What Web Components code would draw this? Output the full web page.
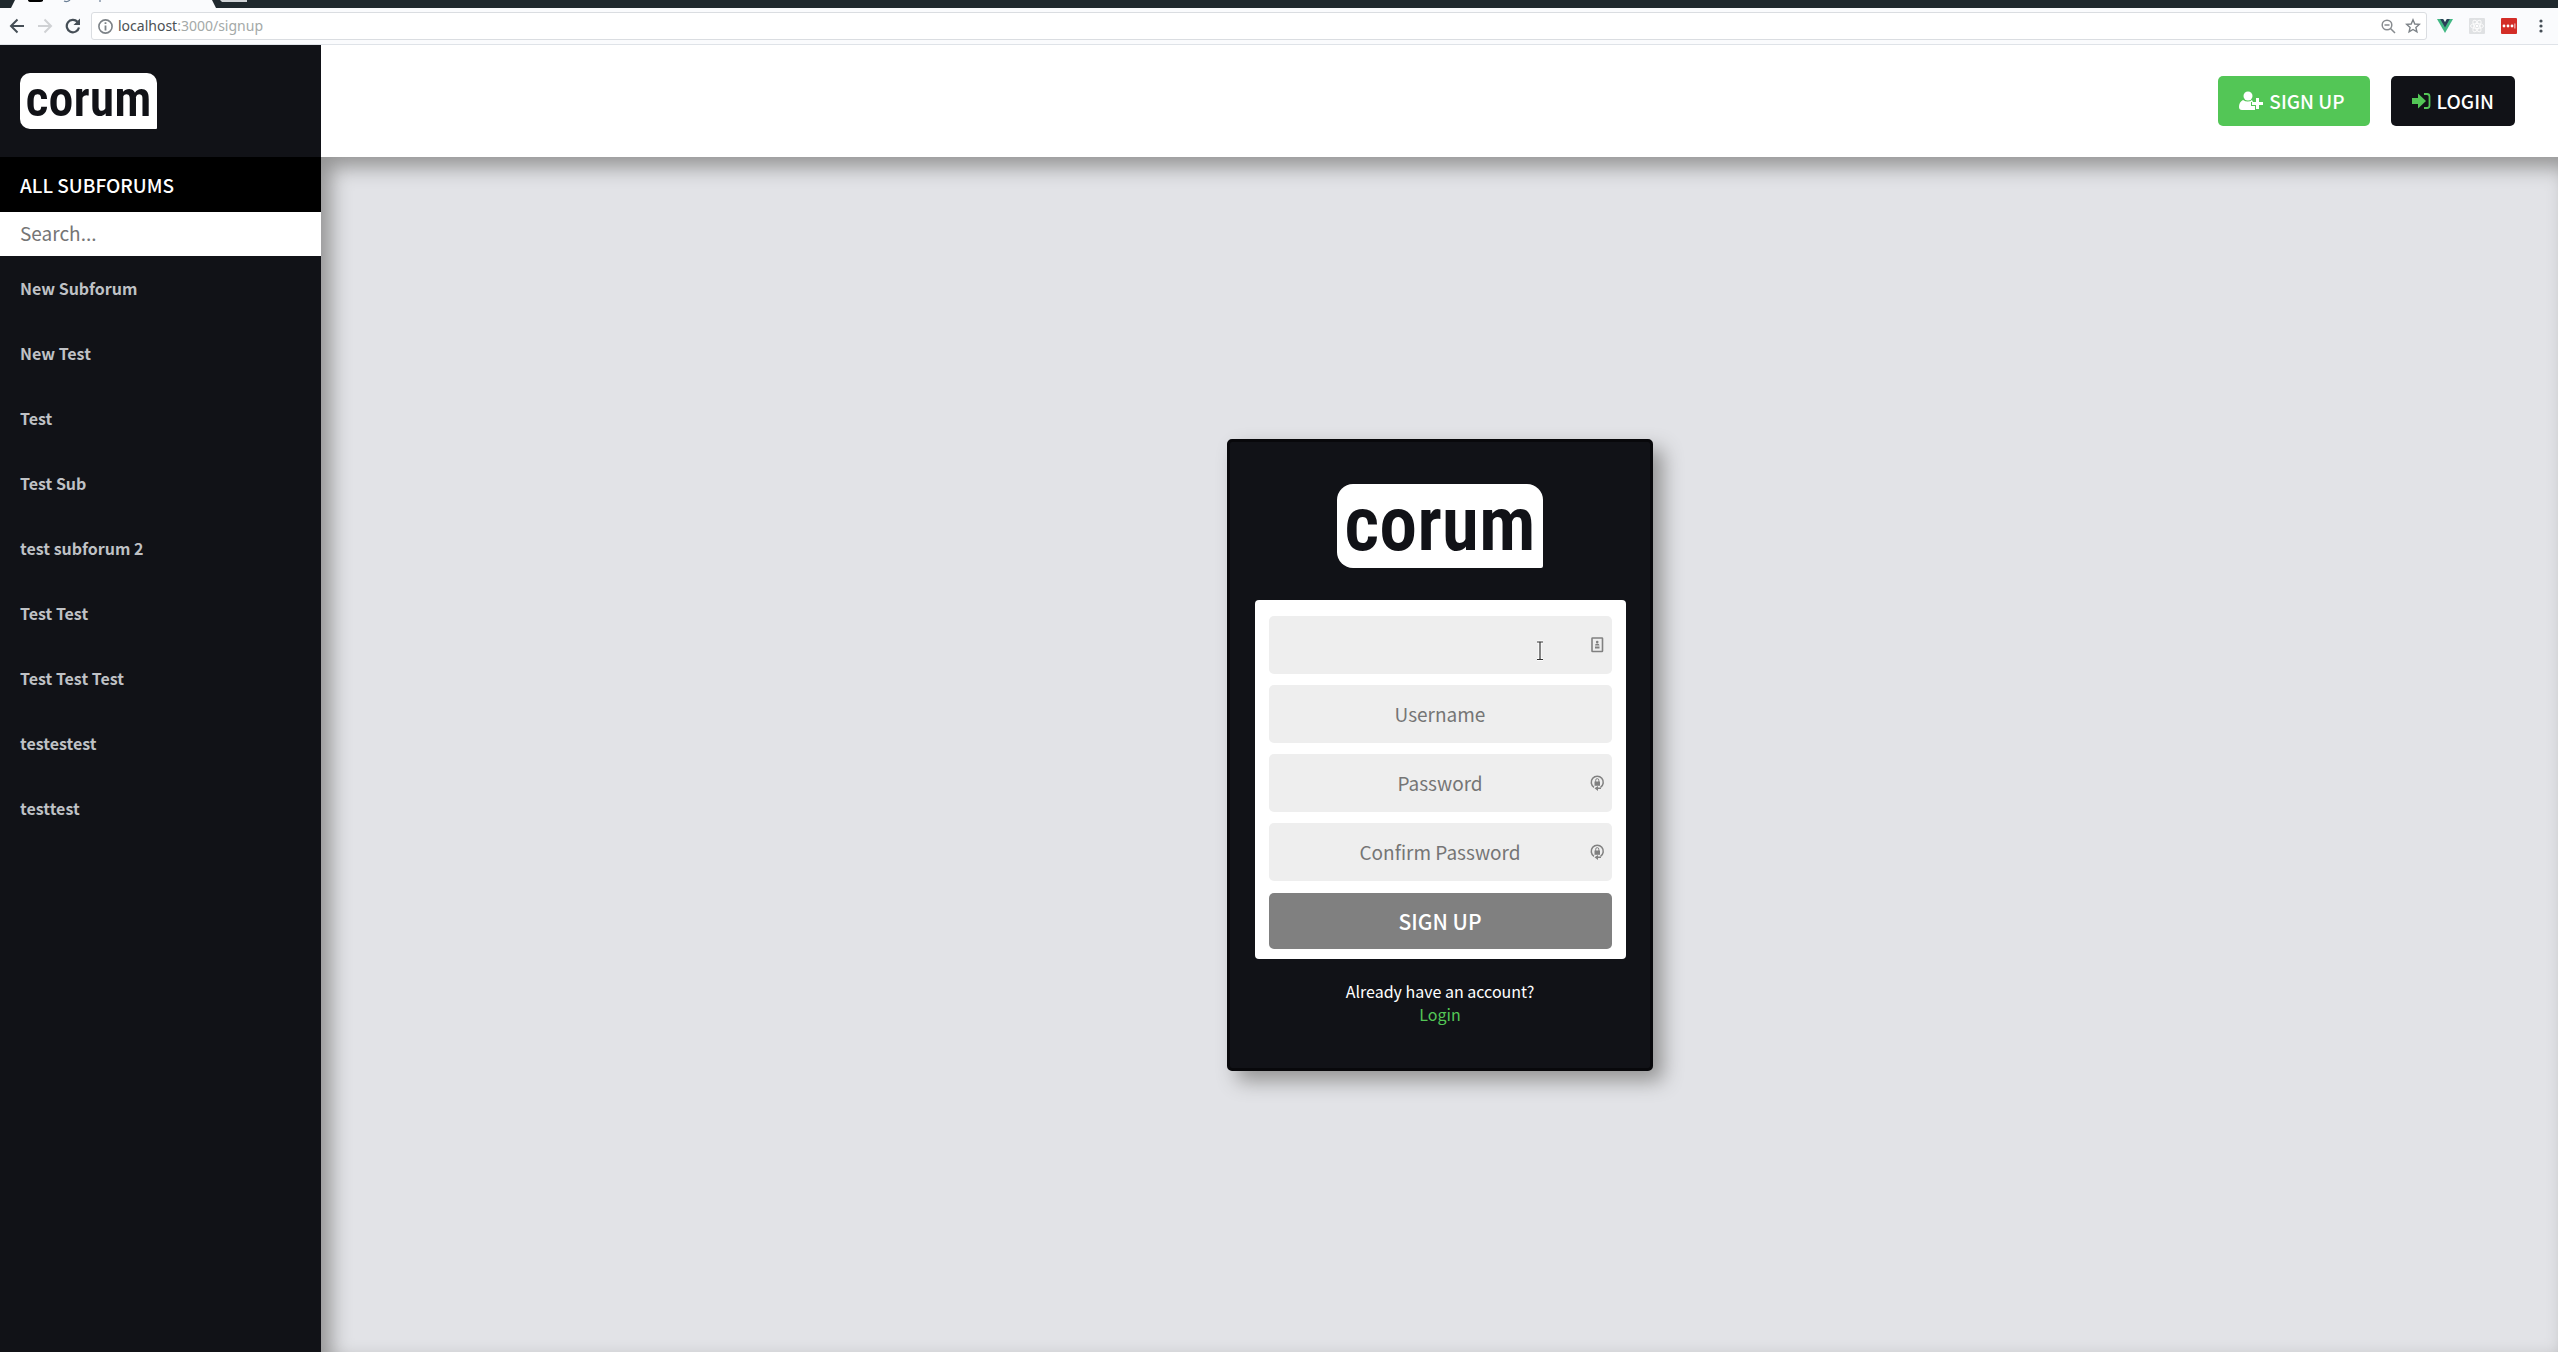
<!DOCTYPE html>
<html lang="en">
<head>
<meta charset="utf-8">
<title>Corum</title>
<style>
html, body { height: 100%; }
body { margin: 0; font-family: "Noto Sans CJK JP", "Noto Sans", sans-serif; background: #e2e3e7; }
</style>
</head>
<body>
<corum-app></corum-app>
<script>
const define = (name, html) => customElements.define(name, class extends HTMLElement {
  constructor() {
    super();
    const t = document.createElement('template');
    t.innerHTML = html;
    this.attachShadow({ mode: 'open' }).append(t.content.cloneNode(true));
  }
});

define('browser-bar', `
<style>
:host { display: block; flex: none; font-family: "Noto Sans", sans-serif; }
.tabs { height: 8px; background: #20292e; overflow: hidden; }
.tabs svg { display: block; }
.bar { height: 36px; background: #fafbfd; border-bottom: 1px solid #dfe3e8; display: flex; align-items: center; gap: 8px; padding: 0 7px; }
button { border: 0; padding: 0; background: none; width: 20px; height: 20px; display: grid; place-items: center; flex: none; }
.bar svg { display: block; }
.url { flex: 1; height: 28px; box-sizing: border-box; border: 1px solid #dadde1; border-radius: 3px; background: #fff; display: flex; align-items: center; gap: 5px; padding: 0 3px 0 6px; }
.url a { flex: 1; font-size: 14px; line-height: 20px; color: #a4a9a8; text-decoration: none; }
.url b { font-weight: 400; color: #4b5154; }
.ext { display: flex; gap: 12px; }
.nav { display: flex; gap: 8px; }
</style>
<div class="tabs"><svg width="760" height="8"><path d="M11 8L15 0H212L216 8Z" fill="#fafbfd"/><path d="M28 0H43V1Q42 2 40 2H31Q28 2 28 0Z" fill="#000"/><path d="M64 1Q67 2.500 70 0M100 0V2" fill="none" stroke="#6b7f96" stroke-width="1.200"/><path d="M220 0H247V2H222Z" fill="#d0d3d6"/></svg></div>
<div class="bar">
  <div class="nav">
  <button aria-label="Back"><svg width="16" height="16" viewBox="0 0 16 16" fill="none" stroke="#454e56" stroke-width="2"><path d="M15 8H2M8.500 1.500L2 8L8.500 14.500"/></svg></button>
  <button aria-label="Forward"><svg width="16" height="16" viewBox="0 0 16 16" fill="none" stroke="#cfd1d4" stroke-width="2"><path d="M1 8H14M7.500 1.500L14 8L7.500 14.500"/></svg></button>
  <button aria-label="Reload"><svg width="16" height="16" viewBox="0 0 16 16"><path d="M12.500 3.800A6.200 6.200 0 1 0 14 9.500" fill="none" stroke="#454e56" stroke-width="2.200"/><path d="M15 0.500V7H8.500Z" fill="#454e56"/></svg></button>
  </div>
  <div class="url">
    <svg width="15" height="15" viewBox="0 0 15 15"><circle cx="7.500" cy="7.500" r="6.600" fill="none" stroke="#7c8287" stroke-width="1.600"/><path d="M6.600 3.300h1.800v1.800H6.600zM6.600 6.400h1.800v5H6.600z" fill="#7c8287"/></svg>
    <a href="#"><b>localhost</b>:3000/signup</a>
    <button aria-label="Zoom"><svg width="15" height="15" viewBox="0 0 15 15" fill="none" stroke="#878b8f" stroke-width="1.500"><circle cx="6" cy="6" r="4.800"/><path d="M3.500 6h5M9.500 9.500L14 14"/></svg></button>
    <button aria-label="Bookmark"><svg width="16" height="16" viewBox="0 0 16 16" fill="none" stroke="#7c8287" stroke-width="1.400"><path d="M8 1.800L9.800 6L14.300 6.400L10.900 9.400L11.900 13.900L8 11.500L4.100 13.900L5.100 9.400L1.700 6.400L6.200 6Z"/></svg></button>
  </div>
  <div class="ext">
  <button aria-label="Vue devtools"><svg width="16" height="16" viewBox="0 0 16 16"><path d="M0 1H16L8 15Z" fill="#41b883"/><path d="M3.200 1H6.300L8 4L9.700 1H12.800L8 9.500Z" fill="#2c3e58"/><path d="M6.300 1L8 4L9.700 1Z" fill="#fafbfd"/></svg></button>
  <button aria-label="React devtools"><svg width="16" height="16" viewBox="0 0 16 16"><rect width="16" height="16" rx="1" fill="#dfe1e3"/><g fill="none" stroke="#fbfbfb"><ellipse cx="8" cy="8" rx="6.500" ry="2.500"/><ellipse cx="8" cy="8" rx="6.500" ry="2.500" transform="rotate(60 8 8)"/><ellipse cx="8" cy="8" rx="6.500" ry="2.500" transform="rotate(120 8 8)"/></g><circle cx="8" cy="8" r="1.300" fill="#fff"/></svg></button>
  <button aria-label="Password manager"><svg width="16" height="16" viewBox="0 0 16 16"><rect width="16" height="16" rx="1" fill="#d32d27"/><g fill="#fff"><circle cx="3" cy="8" r="1.400"/><circle cx="7" cy="8" r="1.400"/><circle cx="11" cy="8" r="1.400"/><path d="M13.500 5.500h.8v5h-.8z"/></g></svg></button>
  <button aria-label="Menu"><svg width="4" height="14" viewBox="0 0 4 14" fill="#454e56"><circle cx="2" cy="2" r="1.600"/><circle cx="2" cy="7" r="1.600"/><circle cx="2" cy="12" r="1.600"/></svg></button>
  </div>
</div>`);

define('corum-logo', `
<style>
:host { display: grid; place-items: center; box-sizing: border-box; width: 137px; height: 56px; border-radius: 10px 10px 1px 10px; background: #fff; color: #111217; font: 600 50px/48px "Roboto Condensed", "Liberation Sans Narrow", "Liberation Sans", sans-serif; }
:host([large]) { width: 206px; height: 84px; border-radius: 16px 16px 2px 16px; font-size: 76px; line-height: 72px; }
span { margin-top: -4px; }
</style><span>corum</span>`);

define('side-item', `
<style>
:host { display: block; }
a { display: block; padding: 0 20px 1px; font-size: 16px; line-height: 64px; font-weight: 700; color: #bfc1c5; text-decoration: none; }
</style><a href="#"><slot></slot></a>`);

define('side-bar', `
<style>
:host { display: block; width: 321px; flex: none; background: #111217; }
.brand { height: 112px; box-sizing: border-box; padding: 28px 20px; }
h2 { margin: 0; padding: 0 20px; background: #000; color: #fff; font-size: 19px; line-height: 55px; font-weight: 500; }
input { display: block; box-sizing: border-box; width: 100%; height: 44px; border: 0; padding: 0 20px 4px; background: #fff; font: 400 19px/40px "Noto Sans CJK JP", sans-serif; outline: 0; }
input::placeholder { color: #757575; }
</style>
<div class="brand"><corum-logo></corum-logo></div>
<h2>ALL SUBFORUMS</h2>
<input type="search" placeholder="Search..." aria-label="Search subforums">
<nav><slot></slot></nav>`);

define('top-button', `
<style>
:host { display: block; --bg: #111217; --end: 21px; }
:host([primary]) { --bg: #53c656; --end: 25px; }
button { display: flex; align-items: center; gap: 6px; height: 50px; padding: 0 var(--end) 0 21px; border: 0; border-radius: 5px; background: var(--bg); color: #fff; font: 500 19px/50px "Noto Sans CJK JP", sans-serif; }
</style><button><slot name="icon"></slot><span><slot></slot></span></button>`);

define('field-icon', `
<style>
:host { display: block; width: 16px; height: 18px; }
svg { display: none; }
:host([kind=identity]) .identity, :host([kind=lock]) .lock { display: block; }
</style>
<svg class="identity" width="16" height="18" viewBox="0 0 16 18"><rect x="3" y="2" width="10.500" height="13.500" rx=".5" fill="none" stroke="#808080" stroke-width="1.600"/><circle cx="8.200" cy="6" r="1.300" fill="#808080"/><path d="M6 9.500Q6 7.500 8.200 7.500T10.500 9.500ZM6 10.500h4.500v2H6Z" fill="#808080"/></svg>
<svg class="lock" width="16" height="18" viewBox="0 0 16 18"><path d="M5 13.300A6 6 0 1 1 11.500 13.300" fill="none" stroke="#808080" stroke-width="1.500"/><path d="M5.500 7.500h5.500v4.300H5.500Z" fill="#808080"/><path d="M6.700 8V6.200a1.550 1.550 0 0 1 3.100 0V8" fill="none" stroke="#808080"/><path d="M5.500 14.200L9 12v1.500h3v1.500H9v2Z" fill="#808080"/></svg>`);

define('signup-card', `
<style>
:host { display: block; box-sizing: border-box; width: 426px; padding: 42px 24px 42px 25px; border: 3px solid #08080b; border-radius: 5px; background: #111217; box-shadow: 10px 10px 20px #949494; color: #fff; }
corum-logo { margin: 0 auto 32px; }
form { display: grid; gap: 11px; background: #fff; border-radius: 4px; padding: 16px 14px 10px; }
label { display: grid; }
input, .mark { grid-area: 1 / 1; }
.mark { justify-self: end; align-self: center; margin-right: 7px; display: flex; align-items: center; gap: 44px; }
.caret { margin-top: 12px; }
input { box-sizing: border-box; width: 100%; height: 58px; border: 0; border-radius: 5px; padding: 0 10px; background: #eee; text-align: center; font: 400 19px/58px "Noto Sans CJK JP", sans-serif; outline: 0; }
input::placeholder { color: #757575; }
button { height: 56px; margin-top: 1px; padding: 0; border: 0; border-radius: 5px; background: #808080; color: #fff; font: 500 21px/56px "Noto Sans CJK JP", sans-serif; }
p { margin: 21px 0 0; text-align: center; font-size: 16px; line-height: 23px; }
p a { display: block; color: #53c656; text-decoration: none; }
</style>
<corum-logo large></corum-logo>
<form>
  <label><input type="email" aria-label="Email"><span class="mark">
    <svg class="caret" width="10" height="22" viewBox="0 0 10 22" fill="none"><path d="M2 2H4.500L5 2.500L5.500 2H8M5 2.500V19M2 19.500H4.500L5 19L5.500 19.500H8" stroke="#fff" stroke-width="3"/><path d="M2 2H4.500L5 2.500L5.500 2H8M5 2.500V19M2 19.500H4.500L5 19L5.500 19.500H8" stroke="#333" stroke-width="1.200"/></svg>
    <field-icon kind="identity"></field-icon></span></label>
  <label><input type="text" placeholder="Username" aria-label="Username"></label>
  <label><input type="password" placeholder="Password" aria-label="Password"><field-icon class="mark" kind="lock"></field-icon></label>
  <label><input type="password" placeholder="Confirm Password" aria-label="Confirm Password"><field-icon class="mark" kind="lock"></field-icon></label>
  <button type="button">SIGN UP</button>
</form>
<p>Already have an account?<a href="#">Login</a></p>`);

define('corum-app', `
<style>
:host { display: flex; flex-direction: column; min-height: 100vh; }
.page { flex: 1; display: flex; }
.right { flex: 1; display: flex; flex-direction: column; }
header { height: 112px; box-sizing: border-box; background: #fff; display: flex; justify-content: flex-end; align-items: center; gap: 21px; padding: 0 43px; }
main { flex: 1; display: grid; place-items: center; background: #e2e3e7; box-shadow: inset 10px 10px 20px #949494; }
</style>
<browser-bar></browser-bar>
<div class="page">
<side-bar>
<side-item>New Subforum</side-item><side-item>New Test</side-item><side-item>Test</side-item><side-item>Test Sub</side-item><side-item>test subforum 2</side-item><side-item>Test Test</side-item><side-item>Test Test Test</side-item><side-item>testestest</side-item><side-item>testtest</side-item>
</side-bar>
<div class="right">
<header>
<top-button primary><svg slot="icon" width="24" height="20" viewBox="0 0 24 20" fill="#fff"><circle cx="9" cy="5" r="4.500"/><path d="M4 9Q0 11 0 16Q0 19 3 19H16V15H12V11H14L13 9Q9 12 4 9ZM17 7h3v4h4v3h-4v4h-3v-4h-4v-3h4z"/></svg>SIGN UP</top-button>
<top-button><svg slot="icon" width="19" height="18" viewBox="0 0 19 18" fill="#53c656"><path d="M0 6H6V1.500L14 9L6 16.500V12H0Z"/><path d="M12 2H15Q17.500 2 17.500 4.500V13.500Q17.500 16 15 16H12" fill="none" stroke="#53c656" stroke-width="1.800"/></svg>LOGIN</top-button>
</header>
<main><signup-card></signup-card></main>
</div></div>`);
</script>
</body>
</html>
